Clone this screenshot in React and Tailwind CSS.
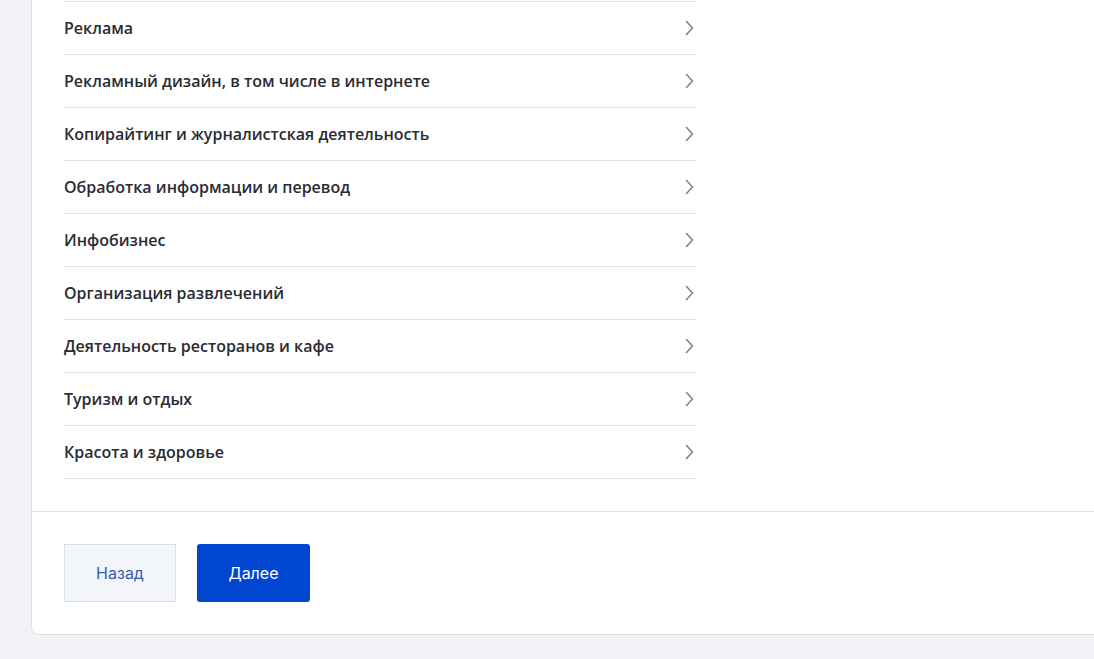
import React from "react";

const items = [
  "Реклама",
  "Рекламный дизайн, в том числе в интернете",
  "Копирайтинг и журналистская деятельность",
  "Обработка информации и перевод",
  "Инфобизнес",
  "Организация развлечений",
  "Деятельность ресторанов и кафе",
  "Туризм и отдых",
  "Красота и здоровье",
];

function Chevron() {
  return (
    <svg width="12" height="16" viewBox="0 0 12 16" fill="none" className="shrink-0">
      <path d="M3.5 1.5 L9.5 8 L3.5 14.5" stroke="#80848c" strokeWidth="1.6" strokeLinecap="round" strokeLinejoin="round" />
    </svg>
  );
}

export default function App() {
  return (
    <div className="w-[1094px] h-[659px] overflow-hidden bg-[#f2f3f7] flex" style={{ fontFamily: '"Open Sans", "Noto Sans", sans-serif' }}>
      <div className="ml-[31px] w-[1100px] shrink-0 h-[635px] bg-white border-l border-b border-[#dfe1e6] rounded-bl-lg flex flex-col pt-px">
        <ul className="ml-[32px] w-[633px] border-t border-[#e1e3e7]">
          {items.map((t) => (
            <li key={t} className="h-[53px] border-b border-[#e1e3e7] flex items-center justify-between pr-[2px]">
              <span className="text-[16px] font-semibold text-[#2a2c33] leading-6">{t}</span>
              <Chevron />
            </li>
          ))}
        </ul>
        <div className="mt-[32px] border-t border-[#e1e3e7] pt-[32px] pl-[32px] flex gap-[21px]" style={{ fontFamily: 'Inter, "Noto Sans", sans-serif' }}>
          <button className="w-[112px] h-[58px] bg-[#f2f6fb] border border-[#d9dee6] text-[#3a5cab] text-[16px]">Назад</button>
          <button className="w-[113px] h-[58px] bg-[#0046d1] rounded-[3px] text-white text-[16px]">Далее</button>
        </div>
      </div>
    </div>
  );
}
